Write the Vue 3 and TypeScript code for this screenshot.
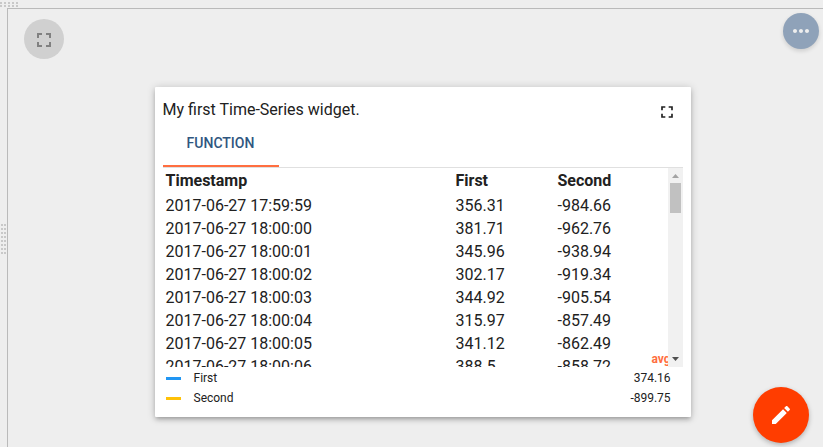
<script setup lang="ts">
interface Row {
  time: string
  first: string
  second: string
}

interface LegendItem {
  label: string
  avg: string
  tone: string
}

const rows: Row[] = [
  { time: '2017-06-27 17:59:59', first: '356.31', second: '-984.66' },
  { time: '2017-06-27 18:00:00', first: '381.71', second: '-962.76' },
  { time: '2017-06-27 18:00:01', first: '345.96', second: '-938.94' },
  { time: '2017-06-27 18:00:02', first: '302.17', second: '-919.34' },
  { time: '2017-06-27 18:00:03', first: '344.92', second: '-905.54' },
  { time: '2017-06-27 18:00:04', first: '315.97', second: '-857.49' },
  { time: '2017-06-27 18:00:05', first: '341.12', second: '-862.49' },
  { time: '2017-06-27 18:00:06', first: '388.5', second: '-858.72' },
]

const legend: LegendItem[] = [
  { label: 'First', avg: '374.16', tone: 'blue' },
  { label: 'Second', avg: '-899.75', tone: 'amber' },
]
</script>

<template>
  <div class="page">
    <div class="gutter-top"><div class="grip-h"></div></div>
    <div class="body">
      <div class="gutter-left"><div class="grip-v"></div></div>
      <main class="canvas">
        <section class="card">
          <header class="card-head">
            <span class="title">My first Time-Series widget.</span>
            <button class="expand" aria-label="Fullscreen">
              <svg viewBox="0 0 24 24" width="20" height="20">
                <path d="M7 14H5v5h5v-2H7v-3zm-2-4h2V7h3V5H5v5zm12 7h-3v2h5v-5h-2v3zM14 5v2h3v3h2V5h-5z" />
              </svg>
            </button>
          </header>
          <nav class="tabs"><button class="tab">FUNCTION</button></nav>
          <div class="scroller">
            <div class="table">
              <div class="row head">
                <span>Timestamp</span><span>First</span><span>Second</span>
              </div>
              <div v-for="row in rows" :key="row.time" class="row">
                <span>{{ row.time }}</span><span>{{ row.first }}</span><span>{{ row.second }}</span>
              </div>
              <span class="avg">avg</span>
            </div>
            <div class="scrollbar">
              <svg class="arrow up" viewBox="0 0 15 15"><path d="M4 10h7L7.500 6z" /></svg>
              <div class="thumb"></div>
              <svg class="arrow down" viewBox="0 0 15 15"><path d="M4 5h7L7.500 9z" /></svg>
            </div>
          </div>
          <footer class="legend">
            <div v-for="item in legend" :key="item.label" class="legend-row">
              <i class="swatch" :class="item.tone"></i>
              <span class="name">{{ item.label }}</span>
              <span>{{ item.avg }}</span>
            </div>
          </footer>
        </section>
      </main>
    </div>

    <button class="fab fullscreen" aria-label="Fullscreen">
      <svg viewBox="0 0 24 24" width="24" height="24">
        <path d="M7 14H5v5h5v-2H7v-3zm-2-4h2V7h3V5H5v5zm12 7h-3v2h5v-5h-2v3zM14 5v2h3v3h2V5h-5z" />
      </svg>
    </button>
    <button class="fab more" aria-label="More">
      <svg viewBox="0 0 24 24" width="24" height="24">
        <path d="M6 10c-1.100 0-2 .9-2 2s.9 2 2 2 2-.9 2-2-.9-2-2-2zm12 0c-1.100 0-2 .9-2 2s.9 2 2 2 2-.9 2-2-.9-2-2-2zm-6 0c-1.100 0-2 .9-2 2s.9 2 2 2 2-.9 2-2-.9-2-2-2z" />
      </svg>
    </button>
    <button class="fab edit" aria-label="Edit">
      <svg viewBox="0 0 24 24" width="24" height="24">
        <path d="M3 17.250V21h3.750L17.810 9.940l-3.750-3.750L3 17.250zM20.710 7.040c.39-.39.39-1.020 0-1.410l-2.340-2.340c-.39-.39-1.020-.39-1.410 0l-1.830 1.830 3.750 3.750 1.830-1.830z" />
      </svg>
    </button>
  </div>
</template>

<style>
body {
  margin: 0;
}
</style>

<style scoped>
.page {
  position: relative;
  box-sizing: border-box;
  display: flex;
  flex-direction: column;
  width: 100%;
  height: 100vh;
  overflow: hidden;
  background: #eee;
  color: #212121;
  font-family: Roboto, "Liberation Sans", sans-serif;
  font-size: 16px;
}
button {
  padding: 0;
  border: 0;
  background: none;
  font: inherit;
}
svg {
  display: block;
  fill: currentColor;
}
.gutter-top {
  height: 8px;
  box-sizing: border-box;
  padding-top: 2px;
}
.grip-h {
  width: 18px;
  height: 5px;
  background: repeating-linear-gradient(90deg, #c8c8c8 0 2px, #eee 2px 4px);
  mask: linear-gradient(#000 0 2px, transparent 2px 3px, #000 3px);
}
.body {
  flex: 1;
  display: flex;
  min-height: 0;
}
.gutter-left {
  box-sizing: border-box;
  width: 7px;
  padding: 216px 0 0 1px;
}
.grip-v {
  width: 5px;
  height: 30px;
  background: repeating-linear-gradient(#c8c8c8 0 2px, #eee 2px 4px);
  mask: linear-gradient(90deg, #000 0 2px, transparent 2px 3px, #000 3px);
}
.canvas {
  flex: 1;
  box-sizing: border-box;
  padding: 78px 132px 30px 147px;
  border: solid #bababa;
  border-width: 1px 0 0 1px;
}
.card {
  box-sizing: border-box;
  height: 330px;
  padding: 8px;
  display: flex;
  flex-direction: column;
  background: #fff;
  border-radius: 1px;
  box-shadow: 0 1px 8px rgba(0, 0, 0, 0.2), 0 3px 4px rgba(0, 0, 0, 0.14), 0 3px 3px -2px rgba(0, 0, 0, 0.12);
}
.card-head {
  height: 24px;
  display: flex;
  align-items: flex-start;
  justify-content: space-between;
}
.title {
  margin-left: -0.5px;
  line-height: 30px;
}
.expand {
  margin: 7px 6px 0 0;
  color: #212121;
}
.tabs {
  display: flex;
  height: 48px;
  border-bottom: 1px solid #e0e0e0;
}
.tab {
  box-sizing: border-box;
  width: 116px;
  height: 48px;
  padding: 2px 1px 0 0;
  border-bottom: 2px solid #ff6e40;
  font-size: 14px;
  font-weight: 500;
  line-height: 44px;
  color: #305680;
}
.scroller {
  height: 199px;
  display: flex;
}
.table {
  position: relative;
  flex: 1;
  overflow: hidden;
  padding: 1px 0 0 2.5px;
}
.row {
  display: grid;
  grid-template-columns: 290px 102px 1fr;
  height: 23px;
  line-height: 23px;
}
.row.head {
  padding-bottom: 2px;
  font-weight: 700;
}
.avg {
  position: absolute;
  left: 488.4px;
  bottom: -1px;
  font-size: 12px;
  font-weight: 700;
  line-height: 17px;
  color: #ff6e40;
}
.scrollbar {
  width: 15px;
  display: flex;
  flex-direction: column;
  align-items: center;
  background: #f1f1f1;
}
.arrow {
  width: 15px;
  height: 15px;
}
.up {
  color: #a3a3a3;
}
.down {
  margin-top: auto;
  color: #505050;
}
.thumb {
  width: 11px;
  height: 30px;
  background: #c1c1c1;
}
.legend {
  padding: 1px 12.4px 0 3px;
  font-size: 12px;
  line-height: 14px;
}
.legend-row {
  display: flex;
  align-items: center;
  height: 20px;
}
.swatch {
  width: 15px;
  height: 3px;
  margin-right: 12.5px;
}
.blue {
  background: #2196f3;
}
.amber {
  background: #ffc107;
}
.name {
  flex: 1;
}
.fab {
  position: absolute;
  display: flex;
  align-items: center;
  justify-content: center;
  border-radius: 50%;
}
.fullscreen {
  left: 24px;
  top: 19px;
  width: 40px;
  height: 40px;
  padding-top: 2px;
  box-sizing: border-box;
  background: #d0d0d0;
  color: #808080;
}
.more {
  left: 783px;
  top: 13px;
  width: 36px;
  height: 36px;
  background: #8fa2b9;
  color: #eee;
  box-shadow: 0 2px 4px rgba(0, 0, 0, 0.14);
}
.edit {
  left: 753px;
  top: 387px;
  width: 56px;
  height: 56px;
  background: #ff3d00;
  color: #fff;
  box-shadow: 0 2px 5px rgba(0, 0, 0, 0.26);
}
</style>
